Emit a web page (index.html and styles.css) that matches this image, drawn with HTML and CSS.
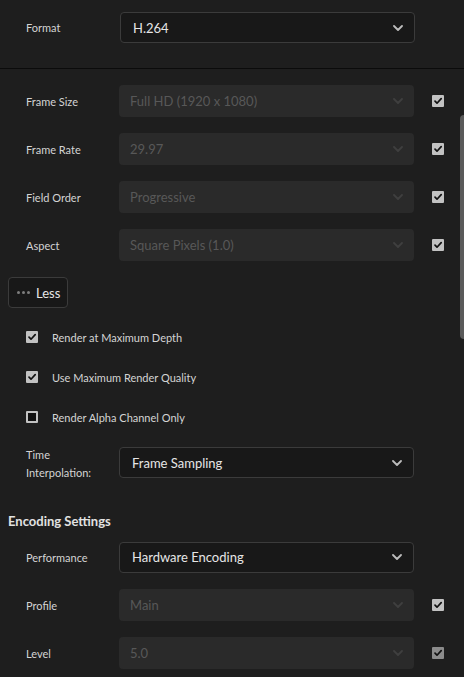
FILE: index.html
```html
<!DOCTYPE html>
<html>
<head>
<meta charset="utf-8">
<link rel="stylesheet" href="styles.css">
</head>
<body>
<div class="panel">
  <div class="top">
    <div class="row">
      <div class="label">Format</div>
      <div class="select active"><span>H.264</span><svg class="chev" viewBox="0 0 10 6"><path d="M1 1 L5 5 L9 1"/></svg></div>
    </div>
  </div>
  <div class="sep"></div>
  <div class="video">
    <div class="row">
      <div class="label">Frame Size</div>
      <div class="select disabled"><span>Full HD (1920 x 1080)</span><svg class="chev" viewBox="0 0 10 6"><path d="M1 1 L5 5 L9 1"/></svg></div>
      <div class="cb on"><svg viewBox="0 0 12 12"><path d="M3 6.2 L5 8.2 L9.2 3.6"/></svg></div>
    </div>
    <div class="row">
      <div class="label">Frame Rate</div>
      <div class="select disabled"><span>29.97</span><svg class="chev" viewBox="0 0 10 6"><path d="M1 1 L5 5 L9 1"/></svg></div>
      <div class="cb on"><svg viewBox="0 0 12 12"><path d="M3 6.2 L5 8.2 L9.2 3.6"/></svg></div>
    </div>
    <div class="row">
      <div class="label">Field Order</div>
      <div class="select disabled"><span>Progressive</span><svg class="chev" viewBox="0 0 10 6"><path d="M1 1 L5 5 L9 1"/></svg></div>
      <div class="cb on"><svg viewBox="0 0 12 12"><path d="M3 6.2 L5 8.2 L9.2 3.6"/></svg></div>
    </div>
    <div class="row">
      <div class="label">Aspect</div>
      <div class="select disabled"><span>Square Pixels (1.0)</span><svg class="chev" viewBox="0 0 10 6"><path d="M1 1 L5 5 L9 1"/></svg></div>
      <div class="cb on"><svg viewBox="0 0 12 12"><path d="M3 6.2 L5 8.2 L9.2 3.6"/></svg></div>
    </div>
    <button class="less"><span class="dots"><i></i><i></i><i></i></span>Less</button>
    <div class="checks">
      <label class="check"><span class="box on"><svg viewBox="0 0 12 12"><path d="M3 6.2 L5 8.2 L9.2 3.6"/></svg></span>Render at Maximum Depth</label>
      <label class="check"><span class="box on"><svg viewBox="0 0 12 12"><path d="M3 6.2 L5 8.2 L9.2 3.6"/></svg></span>Use Maximum Render Quality</label>
      <label class="check"><span class="box off"></span>Render Alpha Channel Only</label>
    </div>
    <div class="row tall">
      <div class="label two">Time<br>Interpolation:</div>
      <div class="select active"><span>Frame Sampling</span><svg class="chev" viewBox="0 0 10 6"><path d="M1 1 L5 5 L9 1"/></svg></div>
    </div>
  </div>
  <h2 class="heading">Encoding Settings</h2>
  <div class="encoding">
    <div class="row">
      <div class="label">Performance</div>
      <div class="select active"><span>Hardware Encoding</span><svg class="chev" viewBox="0 0 10 6"><path d="M1 1 L5 5 L9 1"/></svg></div>
    </div>
    <div class="row">
      <div class="label">Profile</div>
      <div class="select disabled"><span>Main</span><svg class="chev" viewBox="0 0 10 6"><path d="M1 1 L5 5 L9 1"/></svg></div>
      <div class="cb on"><svg viewBox="0 0 12 12"><path d="M3 6.2 L5 8.2 L9.2 3.6"/></svg></div>
    </div>
    <div class="row">
      <div class="label">Level</div>
      <div class="select disabled"><span>5.0</span><svg class="chev" viewBox="0 0 10 6"><path d="M1 1 L5 5 L9 1"/></svg></div>
      <div class="cb on dim"><svg viewBox="0 0 12 12"><path d="M3 6.2 L5 8.2 L9.2 3.6"/></svg></div>
    </div>
  </div>
</div>
<div class="scrollbar"></div>
</body>
</html>
```

FILE: styles.css
```css
html, body {
  margin: 0;
  padding: 0;
  background: #1e1e1e;
  height: 677px;
  overflow: hidden;
}
body {
  font-family: "Lato", "Open Sans", sans-serif;
  color: #d6d6d6;
  position: relative;
}
.panel {
  width: 464px;
}
.top {
  padding: 12px 0 25px 0;
}
.top .row {
  height: 31px;
  margin-bottom: 0;
}
.sep {
  height: 1px;
  background: #0b0b0b;
}
.video {
  padding-top: 16px;
}
.row {
  display: flex;
  align-items: center;
  height: 32px;
  margin-bottom: 16px;
}
.label {
  width: 93px;
  padding-left: 26px;
  font-size: 11px;
  color: #d4d4d4;
  flex: none;
}
.select {
  width: 295px;
  height: 32px;
  box-sizing: border-box;
  border-radius: 4px;
  display: flex;
  align-items: center;
  justify-content: space-between;
  padding: 0 11px 0 11px;
  font-size: 13px;
  flex: none;
}
.select.active {
  background: #181818;
  border: 1px solid #3b3b3b;
  color: #e6e6e6;
  height: 31px;
  padding-left: 12px;
}
.top .select.active {
  margin-left: 1px;
}
.select.disabled {
  background: #2a2a2a;
  color: #585858;
}
.chev {
  width: 10px;
  height: 6px;
  fill: none;
  stroke: #bdbdbd;
  stroke-width: 1.8;
  stroke-linecap: round;
  stroke-linejoin: round;
}
.disabled .chev {
  stroke: #3f3f3f;
}
.cb {
  width: 12px;
  height: 12px;
  margin-left: 18px;
  background: #c2c2c2;
  border-radius: 1px;
  flex: none;
}
.cb.dim {
  background: #8c8c8c;
}
.cb svg, .box svg {
  display: block;
  width: 12px;
  height: 12px;
  fill: none;
  stroke: #111;
  stroke-width: 1.7;
  stroke-linecap: round;
  stroke-linejoin: round;
}
.less {
  display: flex;
  align-items: center;
  margin: 0 0 0 8px;
  height: 31px;
  width: 60px;
  box-sizing: border-box;
  background: #181818;
  border: 1px solid #3b3b3b;
  border-radius: 4px;
  color: #e6e6e6;
  font-family: inherit;
  font-size: 13px;
  padding: 0 0 0 8px;
}
.dots {
  display: flex;
  gap: 2px;
  margin-right: 6px;
}
.dots i {
  width: 3px;
  height: 3px;
  border-radius: 50%;
  background: #7d7d7d;
}
.checks {
  padding-top: 9px;
  display: flex;
  flex-direction: column;
}
.check {
  display: flex;
  align-items: center;
  height: 40px;
  padding-left: 26px;
  font-size: 11px;
  color: #d4d4d4;
}
.box {
  width: 12px;
  height: 12px;
  box-sizing: border-box;
  margin-right: 14px;
  border-radius: 1px;
}
.box.on {
  background: #c2c2c2;
}
.box.off {
  border: 2px solid #c2c2c2;
  background: #111;
}
.row.tall {
  margin-top: 10px;
  align-items: flex-start;
  height: 36px;
  margin-bottom: 0;
}
.label.two {
  line-height: 18px;
  margin-top: -1px;
}
.heading {
  margin: 28px 0 0 8px;
  font-size: 13px;
  font-weight: 700;
  color: #e2e2e2;
  height: 20px;
  line-height: 20px;
}
.encoding {
  padding-top: 10px;
}
.encoding .select.active {
  margin-left: 0;
}
.scrollbar {
  position: absolute;
  left: 460px;
  top: 115px;
  width: 8px;
  height: 224px;
  border-radius: 4px;
  background: #5a5a5a;
}
```
